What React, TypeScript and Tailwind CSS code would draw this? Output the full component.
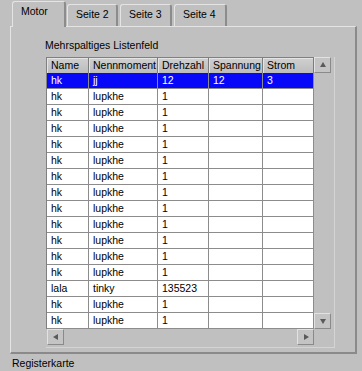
import React from "react";

const cols = [
  { name: "Name", w: "w-[42px]" },
  { name: "Nennmoment", w: "w-[69px]" },
  { name: "Drehzahl", w: "w-[51px]" },
  { name: "Spannung", w: "w-[54px]" },
  { name: "Strom", w: "w-[51px]" },
];

const rows: string[][] = [
  ["hk", "jj", "12", "12", "3"],
  ...Array.from({ length: 12 }, () => ["hk", "lupkhe", "1", "", ""]),
  ["lala", "tinky", "135523", "", ""],
  ["hk", "lupkhe", "1", "", ""],
  ["hk", "lupkhe", "1", "", ""],
];

function Arrow({ dir }: { dir: "up" | "down" | "left" | "right" }) {
  const pts = {
    up: "4,1 7,6 1,6",
    down: "1,2 7,2 4,7",
    left: "1,4 6,1 6,7",
    right: "2,1 7,4 2,7",
  }[dir];
  return (
    <svg width="8" height="8" viewBox="0 0 8 8">
      <polygon points={pts} fill="#5a5a5a" />
    </svg>
  );
}

function ScrollButton({ dir }: { dir: "up" | "down" | "left" | "right" }) {
  return (
    <div className="w-[17px] h-[16px] flex items-center justify-center bg-[#c4c4c4] border-t border-l border-[#e2e2e2] border-r border-b border-r-[#8a8a8a] border-b-[#8a8a8a]">
      <Arrow dir={dir} />
    </div>
  );
}

function Tab({ label, active }: { label: string; active?: boolean }) {
  if (active) {
    return (
      <div className="relative z-10 -mb-px h-[26px] w-[54px] bg-[#c0c0c0] rounded-t-[3px] border-t border-l border-[#e4e4e4] border-r-2 border-r-[#8c8c8c] pl-[8px] pt-[3px] leading-[13px]">
        {label}
      </div>
    );
  }
  return (
    <div className="h-[22px] bg-[#c0c0c0] rounded-t-[3px] border-t border-l border-[#e4e4e4] border-r-2 border-r-[#8c8c8c] pl-[8px] pt-[3px] leading-[13px]">
      {label}
    </div>
  );
}

export default function App() {
  return (
    <div className="w-[362px] h-[371px] bg-[#c0c0c0] text-black text-[10.5px] font-['Liberation_Sans',Arial,sans-serif] overflow-hidden">
      <div className="flex items-end gap-[1px] pl-[12px] pt-[1px] h-[26px]">
        <Tab label="Motor" active />
        <div className="w-[51px]"><Tab label="Seite 2" /></div>
        <div className="w-[52px] ml-[1px]"><Tab label="Seite 3" /></div>
        <div className="w-[53px] ml-[1px]"><Tab label="Seite 4" /></div>
      </div>

      <div className="ml-[10px] w-[347px] h-[328px] border-t border-l border-[#e4e4e4] border-r-2 border-b-2 border-r-[#8a8a8a] border-b-[#8a8a8a] pl-[34px] pt-[12px]">
        <div className="leading-[13px]">Mehrspaltiges Listenfeld</div>
        <div className="mt-[5px] ml-[1px] w-[289px] border-r border-b border-[#d4d4d4] pr-[3px] pb-[2px]">
          <div className="flex">
            <div className="w-[268px] border-l border-t border-[#808080] bg-white">
              <div className="flex h-[15px] bg-[#c4c4c4]">
                {cols.map((c) => (
                  <div
                    key={c.name}
                    className={`${c.w} shrink-0 h-[15px] border-r border-[#7c7c7c] shadow-[inset_1px_1px_0_#e4e4e4] pl-[4px] leading-[15px] whitespace-nowrap overflow-hidden bg-gradient-to-b from-[#d0d0d0] to-[#bcbcbc]`}
                  >
                    {c.name}
                  </div>
                ))}
              </div>
              {rows.map((r, i) => (
                <div
                  key={i}
                  className={`flex h-[16px] border-b border-[#8c8c8c] ${i === 0 ? "bg-[#0808f8] text-white" : "bg-white"}`}
                >
                  {r.map((v, j) => (
                    <div
                      key={j}
                      className={`${cols[j].w} shrink-0 h-[15px] border-r border-[#8c8c8c] pl-[4px] leading-[15px] whitespace-nowrap overflow-hidden`}
                    >
                      {v}
                    </div>
                  ))}
                </div>
              ))}
            </div>
            <div className="w-[17px] flex flex-col justify-between">
              <ScrollButton dir="up" />
              <ScrollButton dir="down" />
            </div>
          </div>
          <div className="flex justify-between w-[268px] h-[16px] pl-[1px]">
            <ScrollButton dir="left" />
            <ScrollButton dir="right" />
          </div>
        </div>
      </div>

      <div className="pl-[12px] pt-[3px] leading-[13px]">Registerkarte</div>
    </div>
  );
}
